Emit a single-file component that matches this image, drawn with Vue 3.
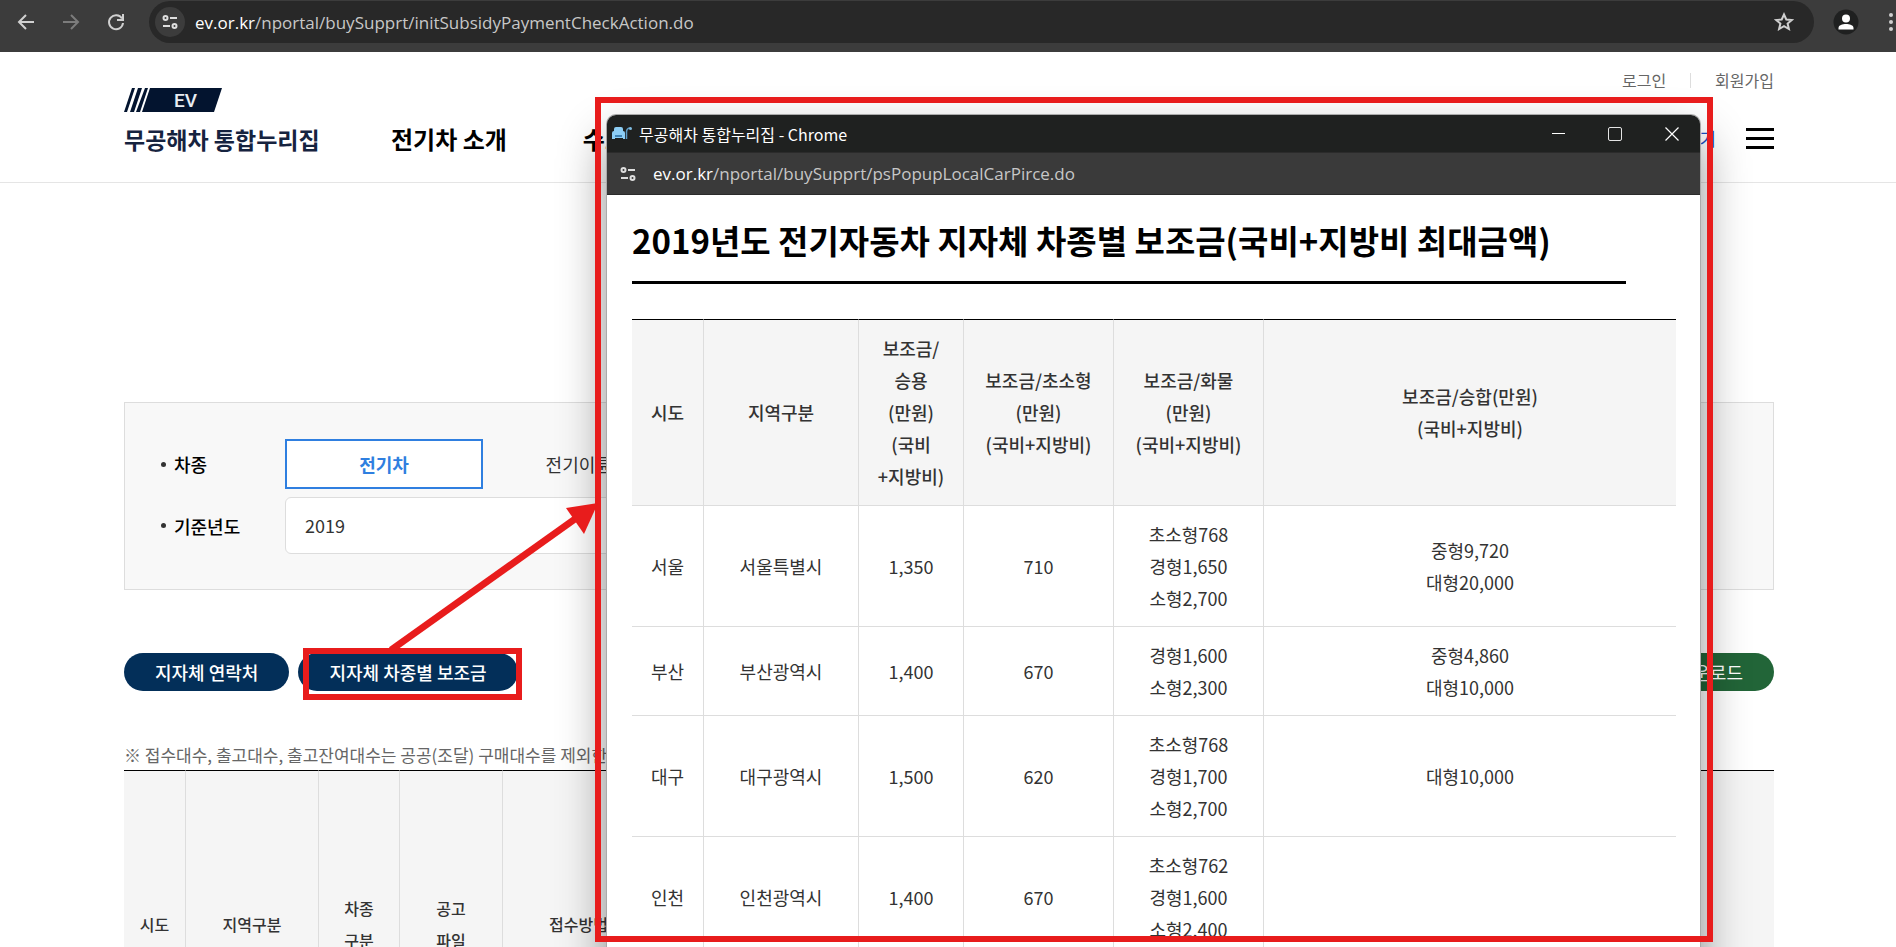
<script setup>
const priceHeads = [
  ['시도'],
  ['지역구분'],
  ['보조금/', '승용', '(만원)', '(국비', '+지방비)'],
  ['보조금/초소형', '(만원)', '(국비+지방비)'],
  ['보조금/화물', '(만원)', '(국비+지방비)'],
  ['보조금/승합(만원)', '(국비+지방비)'],
]

const priceRows = [
  [['서울'], ['서울특별시'], ['1,350'], ['710'], ['초소형768', '경형1,650', '소형2,700'], ['중형9,720', '대형20,000']],
  [['부산'], ['부산광역시'], ['1,400'], ['670'], ['경형1,600', '소형2,300'], ['중형4,860', '대형10,000']],
  [['대구'], ['대구광역시'], ['1,500'], ['620'], ['초소형768', '경형1,700', '소형2,700'], ['대형10,000']],
  [['인천'], ['인천광역시'], ['1,400'], ['670'], ['초소형762', '경형1,600', '소형2,400'], []],
]

const statusHeads = [['시도'], ['지역구분'], ['차종', '구분'], ['공고', '파일'], ['접수방법'], []]
</script>

<template>
  <div class="screen">
    <div class="toolbar">
      <button class="tool" aria-label="뒤로">
        <svg width="20" height="20" viewBox="0 0 20 20" fill="none" stroke="#d0d0d0" stroke-width="2"><path d="M18 10H4M10 3L3 10l7 7" /></svg>
      </button>
      <button class="tool" aria-label="앞으로">
        <svg width="20" height="20" viewBox="0 0 20 20" fill="none" stroke="#7c7c7c" stroke-width="2"><path d="M2 10h14M10 3l7 7-7 7" /></svg>
      </button>
      <button class="tool" aria-label="새로고침">
        <svg width="20" height="20" viewBox="0 0 20 20" fill="none" stroke="#d0d0d0" stroke-width="2"><path d="M16 6.500A7 7 0 1 0 17 11" /><path d="M17 2v6h-6" /></svg>
      </button>
      <div class="omnibox">
        <button class="site-info" aria-label="사이트 정보">
          <svg width="16" height="16" viewBox="0 0 16 16" fill="none" stroke="#dedede" stroke-width="2"><circle cx="3.500" cy="4" r="2" /><path d="M8 4h7M1 12h7" /><circle cx="12.500" cy="12" r="2" /></svg>
        </button>
        <span class="url"><b>ev.or.kr</b>/nportal/buySupprt/initSubsidyPaymentCheckAction.do</span>
        <button class="tool star" aria-label="북마크">
          <svg width="20" height="20" viewBox="0 0 20 20" fill="none" stroke="#cfcfcf" stroke-width="2"><path d="M10 2.500l2.300 5 5.500.5-4.200 3.600 1.300 5.400-4.900-2.900L5.100 17l1.300-5.400L2.200 8l5.500-.5z" /></svg>
        </button>
      </div>
      <button class="avatar" aria-label="프로필">
        <svg width="26" height="26" viewBox="0 0 26 26"><circle cx="13" cy="13" r="12.500" fill="#1f2020" /><circle cx="13" cy="9.500" r="4" fill="#fff" /><path d="M5.500 20.500v-1.500c0-3 4-4 7.500-4s7.500 1 7.500 4v1.500z" fill="#fff" /></svg>
      </button>
      <button class="more" aria-label="메뉴">
        <svg width="6" height="20" viewBox="0 0 6 20" fill="#cfcfcf"><circle cx="3" cy="3" r="2" /><circle cx="3" cy="10" r="2" /><circle cx="3" cy="17" r="2" /></svg>
      </button>
    </div>

    <header class="site-head">
      <a class="logo" href="#">
        <svg width="98" height="24" viewBox="0 0 98 24">
          <path d="M8 0h3L3 24H0zM14 0h4l-8 24H6zM21 0h3l-8 24h-4zM26 0h72l-8 24H18z" fill="#03142f" />
          <text x="50" y="19" fill="#e8ecf2" font-family="Roboto, 'Noto Sans', sans-serif" font-weight="500" font-size="19">EV</text>
        </svg>
        <span>무공해차 통합누리집</span>
      </a>
      <nav class="gnb"><a href="#">전기차 소개</a><a href="#">수소차 소개</a></nav>
      <div class="side">
        <div class="util"><a href="#">로그인</a><i></i><a href="#">회원가입</a></div>
        <div class="quick">
          <a href="#">충전소 찾기</a>
          <button class="burger" aria-label="전체메뉴"><i></i><i></i><i></i></button>
        </div>
      </div>
    </header>

    <main>
      <form class="filter">
        <div class="row">
          <span class="label">차종</span>
          <button type="button" class="kind on">전기차</button>
          <button type="button" class="kind">전기이륜차</button>
        </div>
        <div class="row">
          <label class="label" for="year">기준년도</label>
          <select id="year"><option>2019</option></select>
        </div>
      </form>

      <div class="actions">
        <button class="pill">지자체 연락처</button>
        <button class="pill">지자체 차종별 보조금</button>
        <button class="pill green">엑셀 다운로드</button>
      </div>

      <p class="note">※ 접수대수, 출고대수, 출고잔여대수는 공공(조달) 구매대수를 제외한 대수</p>
      <table class="status">
        <colgroup><col class="s1" /><col class="s2" /><col class="s3" /><col class="s4" /><col class="s5" /><col /></colgroup>
        <thead>
          <tr>
            <th v-for="(h, i) in statusHeads" :key="i"><div v-for="t in h" :key="t">{{ t }}</div></th>
          </tr>
        </thead>
      </table>
    </main>

    <section class="popup">
      <div class="titlebar">
        <svg width="20" height="16" viewBox="0 0 20 16"><path d="M2 3q0-2 2-2h5q2 0 2 2v2q2 0 2 2v6h-2v-1H3v1H0V7q0-2 2-2z" fill="#8dcef5" /><path d="M3 9h7v2H3z" fill="#3f83b5" /><path d="M14.500 13V6q0-4 4-4" fill="none" stroke="#5d9bc4" stroke-width="1.500" /><circle cx="18.500" cy="2.500" r="1.500" fill="#7fbbe0" /></svg>
        <span>무공해차 통합누리집 - Chrome</span>
        <div class="controls">
          <button aria-label="최소화"><svg width="14" height="14" viewBox="0 0 14 14" stroke="#fff" stroke-width="1"><path d="M1 6.500h13" /></svg></button>
          <button aria-label="최대화"><svg width="14" height="14" viewBox="0 0 14 14" fill="none" stroke="#e4e4e4" stroke-width="1"><rect x=".5" y=".5" width="13" height="13" rx="1.500" /></svg></button>
          <button aria-label="닫기"><svg width="14" height="14" viewBox="0 0 14 14" stroke="#fff" stroke-width="1.200"><path d="M.5.5l13 13M13.500.5l-13 13" /></svg></button>
        </div>
      </div>
      <div class="popbar">
        <svg width="16" height="16" viewBox="0 0 16 16" fill="none" stroke="#dedede" stroke-width="2"><circle cx="3.500" cy="4" r="2" /><path d="M8 4h7M1 12h7" /><circle cx="12.500" cy="12" r="2" /></svg>
        <span class="url"><b>ev.or.kr</b>/nportal/buySupprt/psPopupLocalCarPirce.do</span>
      </div>
      <div class="popbody">
        <h1>2019년도 전기자동차 지자체 차종별 보조금(국비+지방비 최대금액)</h1>
        <table class="price">
          <colgroup><col class="p1" /><col class="p2" /><col class="p3" /><col class="p4" /><col class="p4" /><col /></colgroup>
          <thead>
            <tr>
              <th v-for="(h, i) in priceHeads" :key="i"><div v-for="t in h" :key="t">{{ t }}</div></th>
            </tr>
          </thead>
          <tbody>
            <tr v-for="(r, i) in priceRows" :key="i">
              <td v-for="(c, j) in r" :key="j"><div v-for="t in c" :key="t">{{ t }}</div></td>
            </tr>
          </tbody>
        </table>
      </div>
    </section>

    <div class="mark mark-window"></div>
    <div class="mark mark-button"></div>
    <svg class="arrow" width="220" height="160" viewBox="0 0 220 160"><path d="M7 156L198 20" stroke="#e81c1c" stroke-width="7" /><path d="M214 9l-32 5 18 26z" fill="#e81c1c" /></svg>
  </div>
</template>

<style>
body {
  margin: 0;
}
</style>

<style scoped>
* {
  box-sizing: border-box;
}
.screen {
  position: relative;
  height: 100vh;
  overflow: hidden;
  background: #fff;
  color: #333;
  font-family: "Noto Sans CJK KR", sans-serif;
  font-size: 18px;
}
button {
  border: 0;
  padding: 0;
  background: none;
  font: inherit;
  color: inherit;
}
a {
  color: inherit;
  text-decoration: none;
}
svg {
  display: block;
}
.toolbar {
  display: flex;
  align-items: center;
  height: 52px;
  padding: 0 2px 8px 16px;
  background: #3c3c3c;
}
.tool {
  width: 20px;
  margin-right: 25px;
}
.omnibox {
  flex: 1;
  display: flex;
  align-items: center;
  height: 42px;
  margin-right: 19px;
  padding-left: 6px;
  border-radius: 21px;
  background: #282828;
}
.toolbar > .tool:nth-child(3) {
  margin-right: 23px;
}
.site-info {
  display: grid;
  place-items: center;
  width: 30px;
  height: 30px;
  margin-right: 10px;
  border-radius: 50%;
  background: #3c3c3c;
}
.url {
  flex: 1;
  font-family: "Open Sans", "Noto Sans", sans-serif;
  font-size: 17px;
  color: #c7c7c7;
  white-space: nowrap;
}
.url b {
  font-weight: 400;
  color: #fff;
}
.star {
  margin-right: 20px;
}
.avatar {
  width: 26px;
  margin-right: 29px;
}
.site-head {
  display: flex;
  height: 131px;
  padding: 0 122px 0 124px;
  border-bottom: 1px solid #e5e5e5;
}
.logo {
  width: 267px;
  padding-top: 36px;
  color: #16233f;
  font-size: 23px;
  font-weight: 700;
  line-height: 36px;
}
.logo span {
  display: block;
  margin-top: 9px;
}
.gnb {
  display: flex;
  gap: 76px;
  padding-top: 69px;
  color: #000;
  font-size: 24px;
  font-weight: 700;
  line-height: 36px;
  white-space: nowrap;
}
.side {
  margin-left: auto;
  padding-top: 16px;
}
.util {
  display: flex;
  justify-content: flex-end;
  align-items: center;
  color: #666;
  font-size: 16px;
  line-height: 24px;
}
.util i {
  width: 1px;
  height: 15px;
  margin: 0 24px;
  background: #ddd;
}
.quick {
  display: flex;
  justify-content: flex-end;
  align-items: center;
  gap: 30px;
  margin-top: 33px;
  color: #1b4fc4;
  font-size: 18px;
  line-height: 26px;
}
.burger {
  display: grid;
  gap: 6px;
  width: 28px;
}
.burger i {
  height: 3px;
  background: #000;
}
main {
  padding: 219px 122px 0 124px;
}
.filter {
  display: grid;
  gap: 8px;
  padding: 36px 38px 35px 36px;
  border: 1px solid #ddd;
  background: #f8f8f8;
}
.row {
  display: flex;
  align-items: center;
}
.label {
  display: flex;
  align-items: center;
  gap: 8px;
  width: 124px;
  color: #000;
  font-weight: 500;
}
.label::before {
  content: "";
  width: 5px;
  height: 5px;
  border-radius: 50%;
  background: #333;
}
.kind {
  width: 198px;
  height: 50px;
  margin-right: 5px;
}
.kind.on {
  border: 2px solid #2f7fe0;
  background: #fff;
  color: #2f7fe0;
  font-weight: 700;
}
select {
  width: 50%;
  height: 57px;
  padding: 0 19px 2px;
  border: 1px solid #ddd;
  border-radius: 6px;
  background: #fff;
  color: #333;
  font: inherit;
  appearance: none;
}
.actions {
  display: flex;
  gap: 9px;
  margin-top: 63px;
}
.pill {
  height: 38px;
  padding: 0 31px;
  border-radius: 19px;
  background: #032f59;
  color: #fff;
  font-weight: 500;
}
.green {
  margin-left: auto;
  background: #226538;
  font-weight: 400;
}
.note {
  margin: 50px 0 0;
  padding-bottom: 2px;
  color: #666;
  font-size: 17px;
  line-height: 27px;
  white-space: nowrap;
}
table {
  width: 100%;
  table-layout: fixed;
  border-collapse: separate;
  border-spacing: 0;
  text-align: center;
}
th {
  border-top: 1px solid #000;
  background: #f5f5f5;
  font-weight: 500;
}
th,
td {
  border-right: 1px solid #ddd;
  border-bottom: 1px solid #ddd;
  line-height: 32px;
}
th:last-child,
td:last-child {
  border-right: 0;
}
.status th {
  height: 308px;
  padding: 0;
  font-size: 16px;
}
.s1 { width: 62px; }
.s2 { width: 133px; }
.s3 { width: 81px; }
.s4 { width: 103px; }
.s5 { width: 152px; }
.popup {
  position: absolute;
  top: 115px;
  left: 607px;
  right: 196px;
  bottom: -40px;
  border-radius: 9px;
  background: #fff;
  box-shadow: 0 0 0 1px #aaa, 0 24px 48px rgba(0, 0, 0, 0.45);
  overflow: hidden;
}
.titlebar {
  display: flex;
  align-items: center;
  height: 37px;
  padding-left: 5px;
  background: #1f2120;
  color: #fff;
  font-size: 16px;
}
.titlebar span {
  margin-left: 7px;
}
.controls {
  display: flex;
  gap: 43px;
  margin-left: auto;
  padding-right: 21px;
}
.popbar {
  display: flex;
  align-items: center;
  gap: 17px;
  height: 43px;
  padding-left: 13px;
  border-top: 1px solid #2b2b2b;
  border-bottom: 1px solid #2b2b2b;
  background: #3a3a3a;
}
.popbody {
  padding: 21px 24px 0 25px;
}
h1 {
  margin: 0 50px 35px 0;
  padding-bottom: 16px;
  border-bottom: 3px solid #000;
  color: #000;
  font-size: 33px;
  font-weight: 700;
  line-height: 49px;
  white-space: nowrap;
}
.price th {
  padding: 12px 0 13px;
}
.price td {
  padding: 12px 0;
}
.p1 { width: 72px; }
.p2 { width: 155px; }
.p3 { width: 105px; }
.p4 { width: 150px; }
.mark {
  position: absolute;
  border: 6px solid #e81c1c;
}
.mark-window {
  top: 97px;
  left: 595px;
  right: 183px;
  bottom: 5px;
}
.mark-button {
  top: 648px;
  left: 303px;
  width: 219px;
  height: 52px;
}
.arrow {
  position: absolute;
  top: 494px;
  left: 384px;
}
</style>
